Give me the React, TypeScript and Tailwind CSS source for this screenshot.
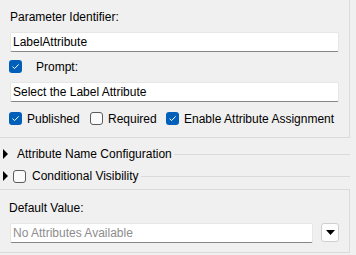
const font = { fontFamily: '"Segoe UI", "Liberation Sans", Arial, sans-serif' };

function Check({ checked }: { checked: boolean }) {
  return checked ? (
    <span className="flex h-[13px] w-[13px] shrink-0 items-center justify-center rounded-[3px] bg-[#005fb8]">
      <svg width="9" height="9" viewBox="0 0 9 9">
        <path d="M1.5 4.6 L3.6 6.6 L7.6 2.4" fill="none" stroke="#fff" strokeWidth="1" />
      </svg>
    </span>
  ) : (
    <span className="block h-[13px] w-[13px] shrink-0 rounded-[3px] border border-[#5c5c5c] bg-[#fafafa]" />
  );
}

function Arrow() {
  return (
    <svg width="6" height="10" viewBox="0 0 6 10" className="shrink-0">
      <path d="M0 0 L5 5 L0 10 Z" fill="#000" />
    </svg>
  );
}

function Field({ value, muted }: { value: string; muted?: boolean }) {
  return (
    <div
      className={`flex h-[20px] items-center rounded-[2px] border border-[#e6e6e6] border-b-[#868686] bg-white pl-[2px] ${
        muted ? "text-[#8d8d8d]" : "text-black"
      }`}
    >
      {value}
    </div>
  );
}

export default function App() {
  return (
    <div className="h-[255px] w-[356px] overflow-hidden bg-[#f0f0f0] text-[12px] leading-[16px] text-black" style={font}>
      <div className="flex h-[138px] w-[350px] flex-col border-r border-b border-[#dadada] pt-[9px] pr-[10px] pl-[10px]">
        <div>Parameter Identifier:</div>
        <div className="mt-[7px]">
          <Field value="LabelAttribute" />
        </div>
        <div className="mt-[8px] -ml-[1px] flex h-[13px] items-center">
          <Check checked />
          <span className="ml-[14px]">Prompt:</span>
        </div>
        <div className="mt-[9px]">
          <Field value="Select the Label Attribute" />
        </div>
        <div className="mt-[10px] -ml-[1px] flex h-[13px] items-center whitespace-nowrap">
          <div className="flex w-[81px] items-center">
            <Check checked />
            <span className="ml-[5px]">Published</span>
          </div>
          <div className="flex w-[76px] items-center">
            <Check checked={false} />
            <span className="ml-[5px]">Required</span>
          </div>
          <div className="flex items-center">
            <Check checked />
            <span className="ml-[5px]">Enable Attribute Assignment</span>
          </div>
        </div>
      </div>

      <div className="mt-[8px] flex h-[16px] w-[350px] items-center pl-[3px]">
        <Arrow />
        <span className="ml-[8px]">Attribute Name Configuration</span>
        <span className="ml-[2px] h-px flex-1 bg-[#dadada]" />
      </div>

      <div className="mt-[6px] flex h-[16px] w-[350px] items-center pl-[3px]">
        <Arrow />
        <span className="ml-[4px] block">
          <Check checked={false} />
        </span>
        <span className="ml-[6px]">Conditional Visibility</span>
        <span className="ml-[2px] h-px flex-1 bg-[#dadada]" />
      </div>

      <div className="mt-[5px] h-[64px] w-[350px] border-t border-r border-b border-[#dadada] pt-[10px] pl-[9px]">
        <div>Default Value:</div>
        <div className="mt-[7px] flex items-start">
          <div className="w-[304px] pl-[1px]">
            <Field value="No Attributes Available" muted />
          </div>
          <button className="ml-[8px] flex h-[19px] w-[18px] items-center justify-center rounded-[3px] border border-[#cfcfcf] bg-[#fdfdfd]">
            <svg width="9" height="5" viewBox="0 0 9 5">
              <path d="M0 0 L9 0 L4.5 5 Z" fill="#000" />
            </svg>
          </button>
        </div>
      </div>
    </div>
  );
}
